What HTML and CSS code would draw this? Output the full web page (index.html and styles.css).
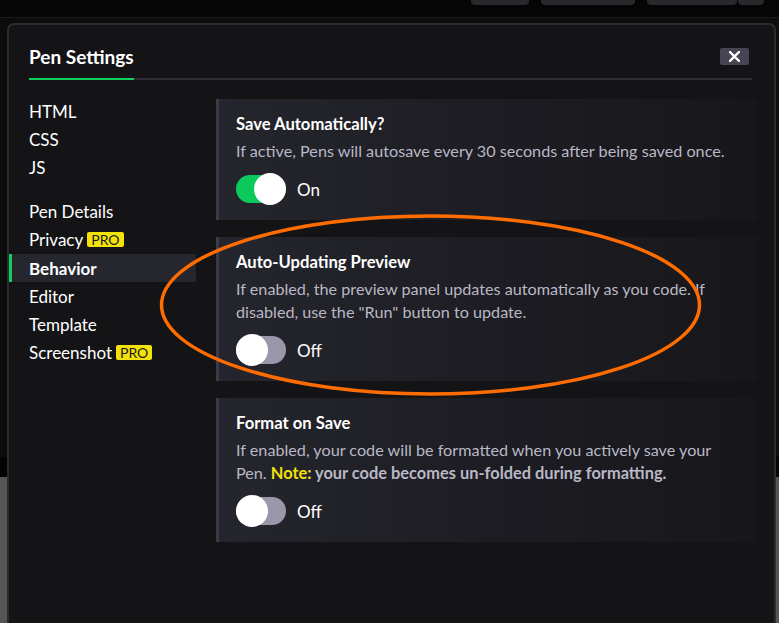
FILE: index.html
```html
<!DOCTYPE html>
<html>
<head>
<meta charset="utf-8">
<link rel="stylesheet" href="styles.css">
</head>
<body>
<div class="page">
  <div class="topbar">
    <div class="tb-btn w58"></div>
    <div class="tb-btn w94"></div>
    <div class="tb-btn w90"></div>
    <div class="tb-btn w26"></div>
  </div>
  <div class="editor"></div>
  <div class="divider"></div>
  <div class="preview"></div>
</div>

<div class="modal">
  <div class="modal-header">
    <h2 class="modal-title">Pen Settings</h2>
    <button class="close-btn" aria-label="Close">
      <svg width="11" height="11" viewBox="0 0 11 11"><path d="M1 1 L10 10 M10 1 L1 10" stroke="#fff" stroke-width="2.4" stroke-linecap="square"/></svg>
    </button>
  </div>
  <div class="modal-body">
    <nav class="sidebar">
      <div class="nav-group">
        <div class="nav-item">HTML</div>
        <div class="nav-item">CSS</div>
        <div class="nav-item">JS</div>
      </div>
      <div class="nav-group">
        <div class="nav-item">Pen Details</div>
        <div class="nav-item">Privacy <span class="pro">PRO</span></div>
        <div class="nav-item active">Behavior</div>
        <div class="nav-item">Editor</div>
        <div class="nav-item">Template</div>
        <div class="nav-item">Screenshot <span class="pro">PRO</span></div>
      </div>
    </nav>
    <main class="content">
      <section class="panel">
        <h3 class="panel-title">Save Automatically?</h3>
        <p class="panel-desc">If active, Pens will autosave every 30 seconds after being saved once.</p>
        <div class="toggle-row">
          <span class="track on"><span class="knob"></span></span>
          <span class="toggle-label">On</span>
        </div>
      </section>
      <section class="panel">
        <h3 class="panel-title">Auto-Updating Preview</h3>
        <p class="panel-desc">If enabled, the preview panel updates automatically as you code. If disabled, use the "Run" button to update.</p>
        <div class="toggle-row">
          <span class="track"><span class="knob"></span></span>
          <span class="toggle-label">Off</span>
        </div>
      </section>
      <section class="panel">
        <h3 class="panel-title">Format on Save</h3>
        <p class="panel-desc">If enabled, your code will be formatted when you actively save your Pen. <strong><span class="note">Note:</span> your code becomes un-folded during formatting.</strong></p>
        <div class="toggle-row">
          <span class="track"><span class="knob"></span></span>
          <span class="toggle-label">Off</span>
        </div>
      </section>
    </main>
  </div>
</div>

<svg class="annotation" width="779" height="623" viewBox="0 0 779 623">
  <ellipse cx="430.5" cy="305" rx="269" ry="89" fill="none" stroke="#ff6c00" stroke-width="3.5"/>
</svg>
</body>
</html>
```

FILE: styles.css
```css
* { box-sizing: border-box; }

html, body {
  margin: 0;
  padding: 0;
}

body {
  width: 779px;
  height: 623px;
  overflow: hidden;
  position: relative;
  background: #080808;
  font-family: Lato, "Noto Sans", sans-serif;
  color: #fff;
}

/* underlying page */
.page {
  display: flex;
  flex-direction: column;
  height: 623px;
}
.topbar {
  height: 18px;
  display: flex;
  gap: 12px;
  padding-left: 471px;
  background: #050505;
  border-bottom: 1px solid #1c1c1e;
  flex-shrink: 0;
}
.tb-btn {
  height: 5px;
  background: #29292d;
  border-radius: 0 0 4px 4px;
}
.w58 { width: 58px; }
.w94 { width: 94px; }
.w90 { width: 90px; margin-right: -11px; }
.w26 { width: 26px; }
.editor {
  height: 439px;
  background: #0c0c0d;
  flex-shrink: 0;
}
.divider {
  height: 20px;
  background: #040404;
  flex-shrink: 0;
}
.preview {
  flex: 1;
  background: #565656;
}

/* modal */
.modal {
  position: absolute;
  left: 7px;
  top: 23px;
  width: 769px;
  height: 610px;
  background: #141417;
  border: 2px solid #2b2b31;
  border-bottom: none;
  border-radius: 7px 7px 0 0;
}

.modal-header {
  display: flex;
  align-items: flex-end;
  justify-content: space-between;
  margin: 0 22px 0 20px;
  padding-top: 18px;
  border-bottom: 2px solid #2c2c34;
}
.modal-title {
  margin: 0 0 -2px 0;
  font-size: 19px;
  line-height: 28px;
  font-weight: 700;
  padding-bottom: 7px;
  border-bottom: 2px solid #0ccf5f;
  color: #fff;
}
.close-btn {
  align-self: flex-start;
  margin-top: 5px;
  margin-right: 3px;
  width: 29px;
  height: 17px;
  padding: 0;
  border: none;
  border-radius: 2px;
  background: #454553;
  display: flex;
  align-items: center;
  justify-content: center;
}

.modal-body {
  display: flex;
  padding-top: 17px;
}

.sidebar {
  width: 187px;
  flex-shrink: 0;
  display: flex;
  flex-direction: column;
  gap: 16px;
}
.nav-item {
  height: 28.2px;
  padding-left: 20px;
  font-size: 17px;
  color: #fff;
  display: flex;
  align-items: center;
  gap: 4px;
}
.nav-item.active {
  background: #26262f;
  box-shadow: inset 3px 0 0 #0ccf5f;
  font-weight: 700;
}
.pro {
  display: inline-block;
  background: #f3e20a;
  color: #1a1a1a;
  font-size: 14px;
  line-height: 15px;
  height: 15px;
  padding: 0 4px;
  border-radius: 2px;
}

.content {
  margin-left: 20px;
  margin-top: 2px;
  width: 541px;
  display: flex;
  flex-direction: column;
  gap: 17.5px;
}

.panel {
  border-left: 3px solid #3a3a48;
  padding: 13px 17px 14.5px 17px;
  background: linear-gradient(90deg, #25252d 0%, #1c1c22 55%, #17171b 100%);
}
.panel-title {
  margin: 0;
  font-size: 16.6px;
  line-height: 24px;
  font-weight: 700;
  color: #fff;
}
.panel-desc {
  margin: 3px 0 0 0;
  font-size: 16.2px;
  line-height: 23px;
  color: #b9b8c5;
}
.panel-desc strong {
  font-weight: 700;
  font-size: 16.4px;
}
.note {
  color: #f3e20a;
}

.toggle-row {
  display: flex;
  align-items: center;
  margin-top: 11px;
  height: 32px;
}
.track {
  width: 50px;
  height: 28px;
  border-radius: 14px;
  background: #9a97aa;
  display: flex;
  align-items: center;
  justify-content: flex-start;
}
.track.on {
  background: #0cc95c;
  justify-content: flex-end;
}
.knob {
  width: 32px;
  height: 32px;
  border-radius: 50%;
  background: #fff;
  flex-shrink: 0;
}
.toggle-label {
  margin-left: 11px;
  font-size: 17px;
  color: #fff;
}

.annotation {
  position: absolute;
  left: 0;
  top: 0;
  pointer-events: none;
}
```
